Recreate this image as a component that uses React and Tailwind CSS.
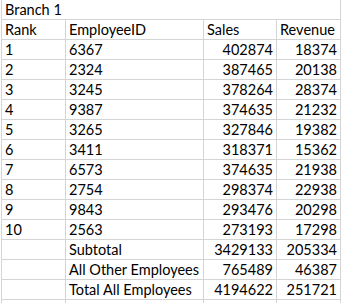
import React from "react";

const rows = [
  ["1", "6367", "402874", "18374"],
  ["2", "2324", "387465", "20138"],
  ["3", "3245", "378264", "28374"],
  ["4", "9387", "374635", "21232"],
  ["5", "3265", "327846", "19382"],
  ["6", "3411", "318371", "15362"],
  ["7", "6573", "374635", "21938"],
  ["8", "2754", "298374", "22938"],
  ["9", "9843", "293476", "20298"],
  ["10", "2563", "273193", "17298"],
  ["", "Subtotal", "3429133", "205334"],
  ["", "All Other Employees", "765489", "46387"],
  ["", "Total All Employees", "4194622", "251721"],
  ["", "", "", ""],
];

const cell = "h-5 border-r border-b border-[#d4d4d4] px-[3px] leading-[19px] whitespace-nowrap overflow-visible";

export default function App() {
  return (
    <div
      className="w-[343px] h-[303px] overflow-hidden bg-white text-black text-[14.5px] pl-px"
      style={{ fontFamily: "Lato, 'Liberation Sans', sans-serif" }}
    >
      <div className="w-[340px] border-l border-[#d4d4d4]">
        <div className={cell + " pl-[3px]"}>Branch 1</div>
        <div className="grid grid-cols-[64px_138px_73px_64px]">
          <div className={cell}>Rank</div>
          <div className={cell}>EmployeeID</div>
          <div className={cell}>Sales</div>
          <div className={cell}>Revenue</div>
          {rows.map((r, i) => (
            <React.Fragment key={i}>
              <div className={cell}>{r[0]}</div>
              <div className={cell}>{r[1]}</div>
              <div className={cell + " text-right"}>{r[2]}</div>
              <div className={cell + " text-right"}>{r[3]}</div>
            </React.Fragment>
          ))}
        </div>
      </div>
    </div>
  );
}
